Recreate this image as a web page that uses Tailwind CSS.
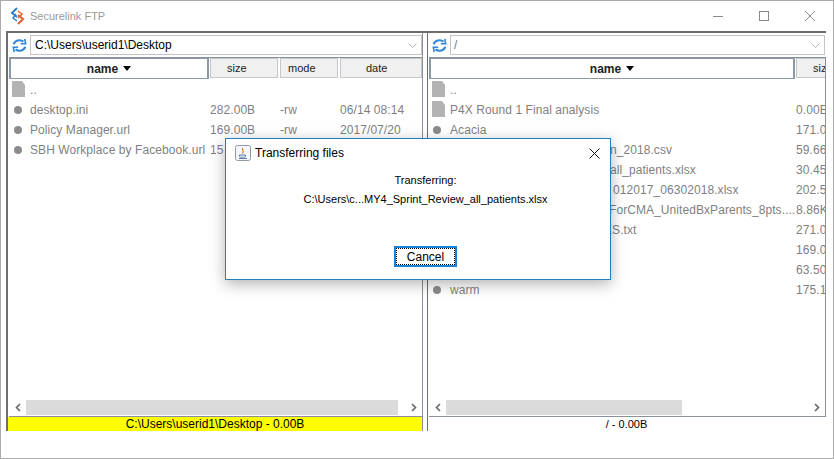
<!DOCTYPE html>
<html lang="en">
<head>
    <meta charset="UTF-8">
    <title>Securelink FTP</title>
    <script src="https://cdn.jsdelivr.net/npm/@tailwindcss/browser@4"></script>
</head>
<body class="bg-white overflow-hidden font-['Liberation_Sans',Arial,sans-serif]">
<div class="relative w-[834px] h-[459px] border border-[#ababab] bg-white flex flex-col overflow-hidden">

    <!-- title bar -->
    <div class="h-[30px] flex items-center shrink-0">
        <svg class="ml-[9px] w-[15px] h-[18px]" viewBox="0 0 15 18" fill="none" stroke-width="2">
            <path d="M7 1 L2 6 L7 10" stroke="#2f80c8"/>
            <path d="M8 8 L13 12 L8 17" stroke="#e8602c"/>
            <path d="M8 4 L12 7 L8 11" stroke="#e8602c" stroke-width="1.5"/>
            <path d="M6 7 L3 11 L7 14" stroke="#2f80c8" stroke-width="1.5"/>
        </svg>
        <span class="ml-[5px] mt-[1px] text-[11px] text-[#9a9a9a]">Securelink FTP</span>
        <div class="ml-auto flex items-center h-full">
            <svg class="w-[46px] h-[30px]" viewBox="0 0 46 30"><path d="M18 15.5H28" stroke="#8a8a8a"/></svg>
            <svg class="w-[46px] h-[30px]" viewBox="0 0 46 30"><rect x="18.5" y="10.5" width="9" height="9" fill="none" stroke="#8a8a8a"/></svg>
            <svg class="w-[46px] h-[30px]" viewBox="0 0 46 30"><path d="M18 10L28 20M28 10L18 20" stroke="#8a8a8a"/></svg>
        </div>
    </div>

    <!-- split panes -->
    <div class="ml-[5px] w-[820px] h-[400px] flex border-t-2 border-[#6e6e6e]">

        <!-- local pane -->
        <div class="w-[417px] h-full flex flex-col border-l-2 border-r border-l-[#6e6e6e] border-r-[#8a9097]">
            <div class="h-[24px] flex items-center shrink-0">
                <svg class="ml-[4px] w-[15px] h-[15px]" viewBox="0 0 17 17" fill="none" stroke="#2f86d6" stroke-width="2.4">
                    <path d="M2 7C3 3 9 1 13 4"/><path d="M10 6.5L15.5 6.5L14.5 1" stroke-width="1.8"/>
                    <path d="M15 10C14 14 8 16 4 13"/><path d="M7 10.5L1.5 10.5L2.5 16" stroke-width="1.8"/>
                </svg>
                <div class="ml-[3px] w-[393px] h-[20px] border border-[#c4c4c4] flex items-center justify-between">
                    <span class="ml-[4px] text-[12px] text-black">C:\Users\userid1\Desktop</span>
                    <svg class="mr-[4px] w-[9px] h-[5px]" viewBox="0 0 9 5" fill="none" stroke="#b5b5b5"><path d="M0.5 0.5L4.5 4.5L8.5 0.5"/></svg>
                </div>
            </div>
            <div class="flex-1 flex flex-col min-h-0">
                <div class="ml-[1px] flex-1 flex flex-col border-t border-[#8a9097] min-h-0">
                    <div class="h-[21px] flex shrink-0 text-[11px] text-[#222]">
                        <div class="w-[200px] border-x-2 border-b border-[#8a9aa8] border-t flex items-center justify-center gap-[5px] font-bold text-[12px]">name <span class="w-0 h-0 border-x-[4px] border-x-transparent border-t-[5px] border-t-black"></span></div>
                        <div class="ml-[1px] w-[68px] h-[20px] border border-[#c4c8cc] bg-[#f0f0f0] pl-[16px] flex items-center">size</div>
                        <div class="ml-[2px] w-[58px] h-[20px] border border-[#c4c8cc] bg-[#f0f0f0] pl-[7px] flex items-center">mode</div>
                        <div class="ml-[2px] w-[82px] h-[20px] border border-[#c4c8cc] bg-[#f0f0f0] pl-[25px] flex items-center">date</div>
                    </div>
                    <div class="flex-1 pt-[1px] text-[12px] tracking-[0.07px] text-[#7f7f7f]">
                        <div class="h-[20px] flex items-center">
                            <svg class="ml-[3px] mb-[2px] w-[13px] h-[16px] shrink-0" viewBox="0 0 13 16"><path d="M0 0H10L13 4V16H0Z" fill="#b3b3b3"/></svg>
                            <span class="ml-[5px]">..</span>
                        </div>
                        <div class="h-[20px] flex items-center"><span class="ml-[5px] w-[8px] h-[8px] rounded-full bg-[#8c8c8c]"></span><span class="ml-[8px] w-[180px]">desktop.ini</span><span class="w-[70px]">282.00B</span><span class="w-[60px]">-rw</span><span>06/14 08:14</span></div>
                        <div class="h-[20px] flex items-center"><span class="ml-[5px] w-[8px] h-[8px] rounded-full bg-[#8c8c8c]"></span><span class="ml-[8px] w-[180px]">Policy Manager.url</span><span class="w-[70px]">169.00B</span><span class="w-[60px]">-rw</span><span>2017/07/20</span></div>
                        <div class="h-[20px] flex items-center"><span class="ml-[5px] w-[8px] h-[8px] rounded-full bg-[#8c8c8c]"></span><span class="ml-[8px] w-[180px]">SBH Workplace by Facebook.url</span><span>15</span></div>
                    </div>
                    <div class="h-[17px] flex items-start border-b border-[#8a9097] shrink-0">
                        <svg class="ml-[6px] mt-[3px] w-[6px] h-[9px]" viewBox="0 0 6 9" fill="none" stroke="#666" stroke-width="1.6"><path d="M5 1L1.5 4.5L5 8"/></svg>
                        <div class="ml-[5px] w-[372px] h-[15px] bg-[#dbdbdb]"></div>
                        <svg class="ml-[13px] mt-[3px] w-[6px] h-[9px]" viewBox="0 0 6 9" fill="none" stroke="#666" stroke-width="1.6"><path d="M1 1L4.5 4.5L1 8"/></svg>
                    </div>
                </div>
                <div class="h-[14px] bg-[#ffff00] text-[12px] text-black leading-[14px] text-center shrink-0">C:\Users\userid1\Desktop - 0.00B</div>
            </div>
        </div>

        <!-- remote pane -->
        <div class="ml-[4px] flex-1 h-full flex flex-col border-l border-[#6e6e6e] min-w-0">
            <div class="h-[24px] flex items-center shrink-0">
                <svg class="ml-[4px] w-[15px] h-[15px]" viewBox="0 0 17 17" fill="none" stroke="#2f86d6" stroke-width="2.4">
                    <path d="M2 7C3 3 9 1 13 4"/><path d="M10 6.5L15.5 6.5L14.5 1" stroke-width="1.8"/>
                    <path d="M15 10C14 14 8 16 4 13"/><path d="M7 10.5L1.5 10.5L2.5 16" stroke-width="1.8"/>
                </svg>
                <div class="ml-[3px] w-[375px] h-[20px] border border-[#c4c4c4] flex items-center justify-between">
                    <span class="ml-[3px] text-[12px] text-[#777]">/</span>
                    <svg class="mr-[4px] w-[9px] h-[5px]" viewBox="0 0 9 5" fill="none" stroke="#b5b5b5"><path d="M0.5 0.5L4.5 4.5L8.5 0.5"/></svg>
                </div>
            </div>
            <div class="w-[397px] h-[360px] ml-[1px] flex flex-col border-t border-r border-b border-[#8a9097] overflow-hidden shrink-0">
                <div class="h-[21px] flex shrink-0 text-[11px] text-[#222]">
                    <div class="w-[366px] shrink-0 border-x-2 border-y border-[#8a9aa8] flex items-center justify-center gap-[5px] font-bold text-[12px]">name <span class="w-0 h-0 border-x-[4px] border-x-transparent border-t-[5px] border-t-black"></span></div>
                    <div class="ml-[1px] w-[60px] h-[20px] shrink-0 border border-[#c4c8cc] bg-[#f0f0f0] pl-[16px] flex items-center">size</div>
                </div>
                <div class="flex-1 pt-[1px] text-[12px] tracking-[0.07px] text-[#7f7f7f] whitespace-nowrap">
                    <div class="h-[20px] flex items-center">
                        <svg class="ml-[3px] mb-[2px] w-[13px] h-[16px] shrink-0" viewBox="0 0 13 16"><path d="M0 0H10L13 4V16H0Z" fill="#b3b3b3"/></svg>
                        <span class="ml-[5px]">..</span>
                    </div>
                    <div class="h-[20px] flex items-center">
                        <svg class="ml-[3px] mb-[2px] w-[13px] h-[16px] shrink-0" viewBox="0 0 13 16"><path d="M0 0H10L13 4V16H0Z" fill="#b3b3b3"/></svg>
                        <span class="ml-[5px] w-[346px] shrink-0">P4X Round 1 Final analysis</span><span>0.00B</span>
                    </div>
                    <div class="h-[20px] flex items-center"><span class="ml-[4px] w-[8px] h-[8px] shrink-0 rounded-full bg-[#8c8c8c]"></span><span class="ml-[9px] w-[346px] shrink-0">Acacia</span><span>171.0</span></div>
                    <div class="h-[20px] flex items-center justify-end"><span class="w-[187px] shrink-0 [text-indent:1px]">n_2018.csv</span><span class="w-[29px] shrink-0">59.66</span></div>
                    <div class="h-[20px] flex items-center justify-end"><span class="w-[187px] shrink-0 [text-indent:1px]">all_patients.xlsx</span><span class="w-[29px] shrink-0">30.45</span></div>
                    <div class="h-[20px] flex items-center justify-end"><span class="w-[187px] shrink-0 [text-indent:4px]">012017_06302018.xlsx</span><span class="w-[29px] shrink-0">202.5</span></div>
                    <div class="h-[20px] flex items-center justify-end"><span class="w-[187px] shrink-0">ForCMA_UnitedBxParents_8pts....</span><span class="w-[29px] shrink-0">8.86K</span></div>
                    <div class="h-[20px] flex items-center justify-end"><span class="w-[187px] shrink-0 [text-indent:-5px]">ES.txt</span><span class="w-[29px] shrink-0">271.0</span></div>
                    <div class="h-[20px] flex items-center justify-end"><span class="w-[29px] shrink-0">169.0</span></div>
                    <div class="h-[20px] flex items-center justify-end"><span class="w-[29px] shrink-0">63.50</span></div>
                    <div class="h-[20px] flex items-center"><span class="ml-[4px] w-[8px] h-[8px] shrink-0 rounded-full bg-[#8c8c8c]"></span><span class="ml-[9px] w-[346px] shrink-0">warm</span><span>175.1</span></div>
                </div>
                <div class="h-[16px] flex items-start shrink-0">
                    <svg class="ml-[6px] mt-[3px] w-[6px] h-[9px]" viewBox="0 0 6 9" fill="none" stroke="#666" stroke-width="1.6"><path d="M5 1L1.5 4.5L5 8"/></svg>
                    <div class="ml-[5px] w-[236px] h-[15px] bg-[#dbdbdb]"></div>
                    <svg class="ml-[132px] mt-[3px] w-[6px] h-[9px]" viewBox="0 0 6 9" fill="none" stroke="#666" stroke-width="1.6"><path d="M1 1L4.5 4.5L1 8"/></svg>
                </div>
            </div>
            <div class="w-[397px] h-[14px] text-[11px] text-black leading-[14px] text-center">/ - 0.00B</div>
        </div>
    </div>

    <!-- transfer dialog -->
    <div class="absolute left-[224px] top-[137px] w-[386px] h-[142px] bg-white border border-[#2080c0] shadow-[0_4px_14px_rgba(0,0,0,0.3)] flex flex-col">
        <div class="h-[28px] flex items-center shrink-0">
            <svg class="ml-[9px] w-[16px] h-[16px]" viewBox="0 0 16 16" fill="none">
                <rect x="0.5" y="0.5" width="15" height="15" rx="2" fill="#f4f6f9" stroke="#8f9aa8"/>
                <path d="M8 3C6 5 10 6 7.5 8.5" stroke="#e07b20" stroke-width="1.2"/>
                <path d="M4.5 10H10.5V11.5C10.5 12.5 4.5 12.5 4.5 11.5Z" stroke="#5a7ea6"/>
                <path d="M4 13.5H12" stroke="#5a7ea6"/>
            </svg>
            <span class="ml-[4px] text-[12px] text-black">Transferring files</span>
            <svg class="ml-auto mr-[10px] w-[11px] h-[11px]" viewBox="0 0 11 11" stroke="#111"><path d="M0.5 0.5L10.5 10.5M10.5 0.5L0.5 10.5"/></svg>
        </div>
        <div class="pl-[15px] text-[11px] text-black text-center leading-[19px] mt-[4px]">
            <div>Transferring:</div>
            <div>C:\Users\c...MY4_Sprint_Review_all_patients.xlsx</div>
        </div>
        <div class="pl-[15px] mt-[37px] flex justify-center">
            <button class="w-[63px] h-[21px] border-2 border-[#1883d7] text-[12px] text-black outline-1 outline-dotted outline-offset-[-3px] outline-black">Cancel</button>
        </div>
    </div>
</div>
</body>
</html>
